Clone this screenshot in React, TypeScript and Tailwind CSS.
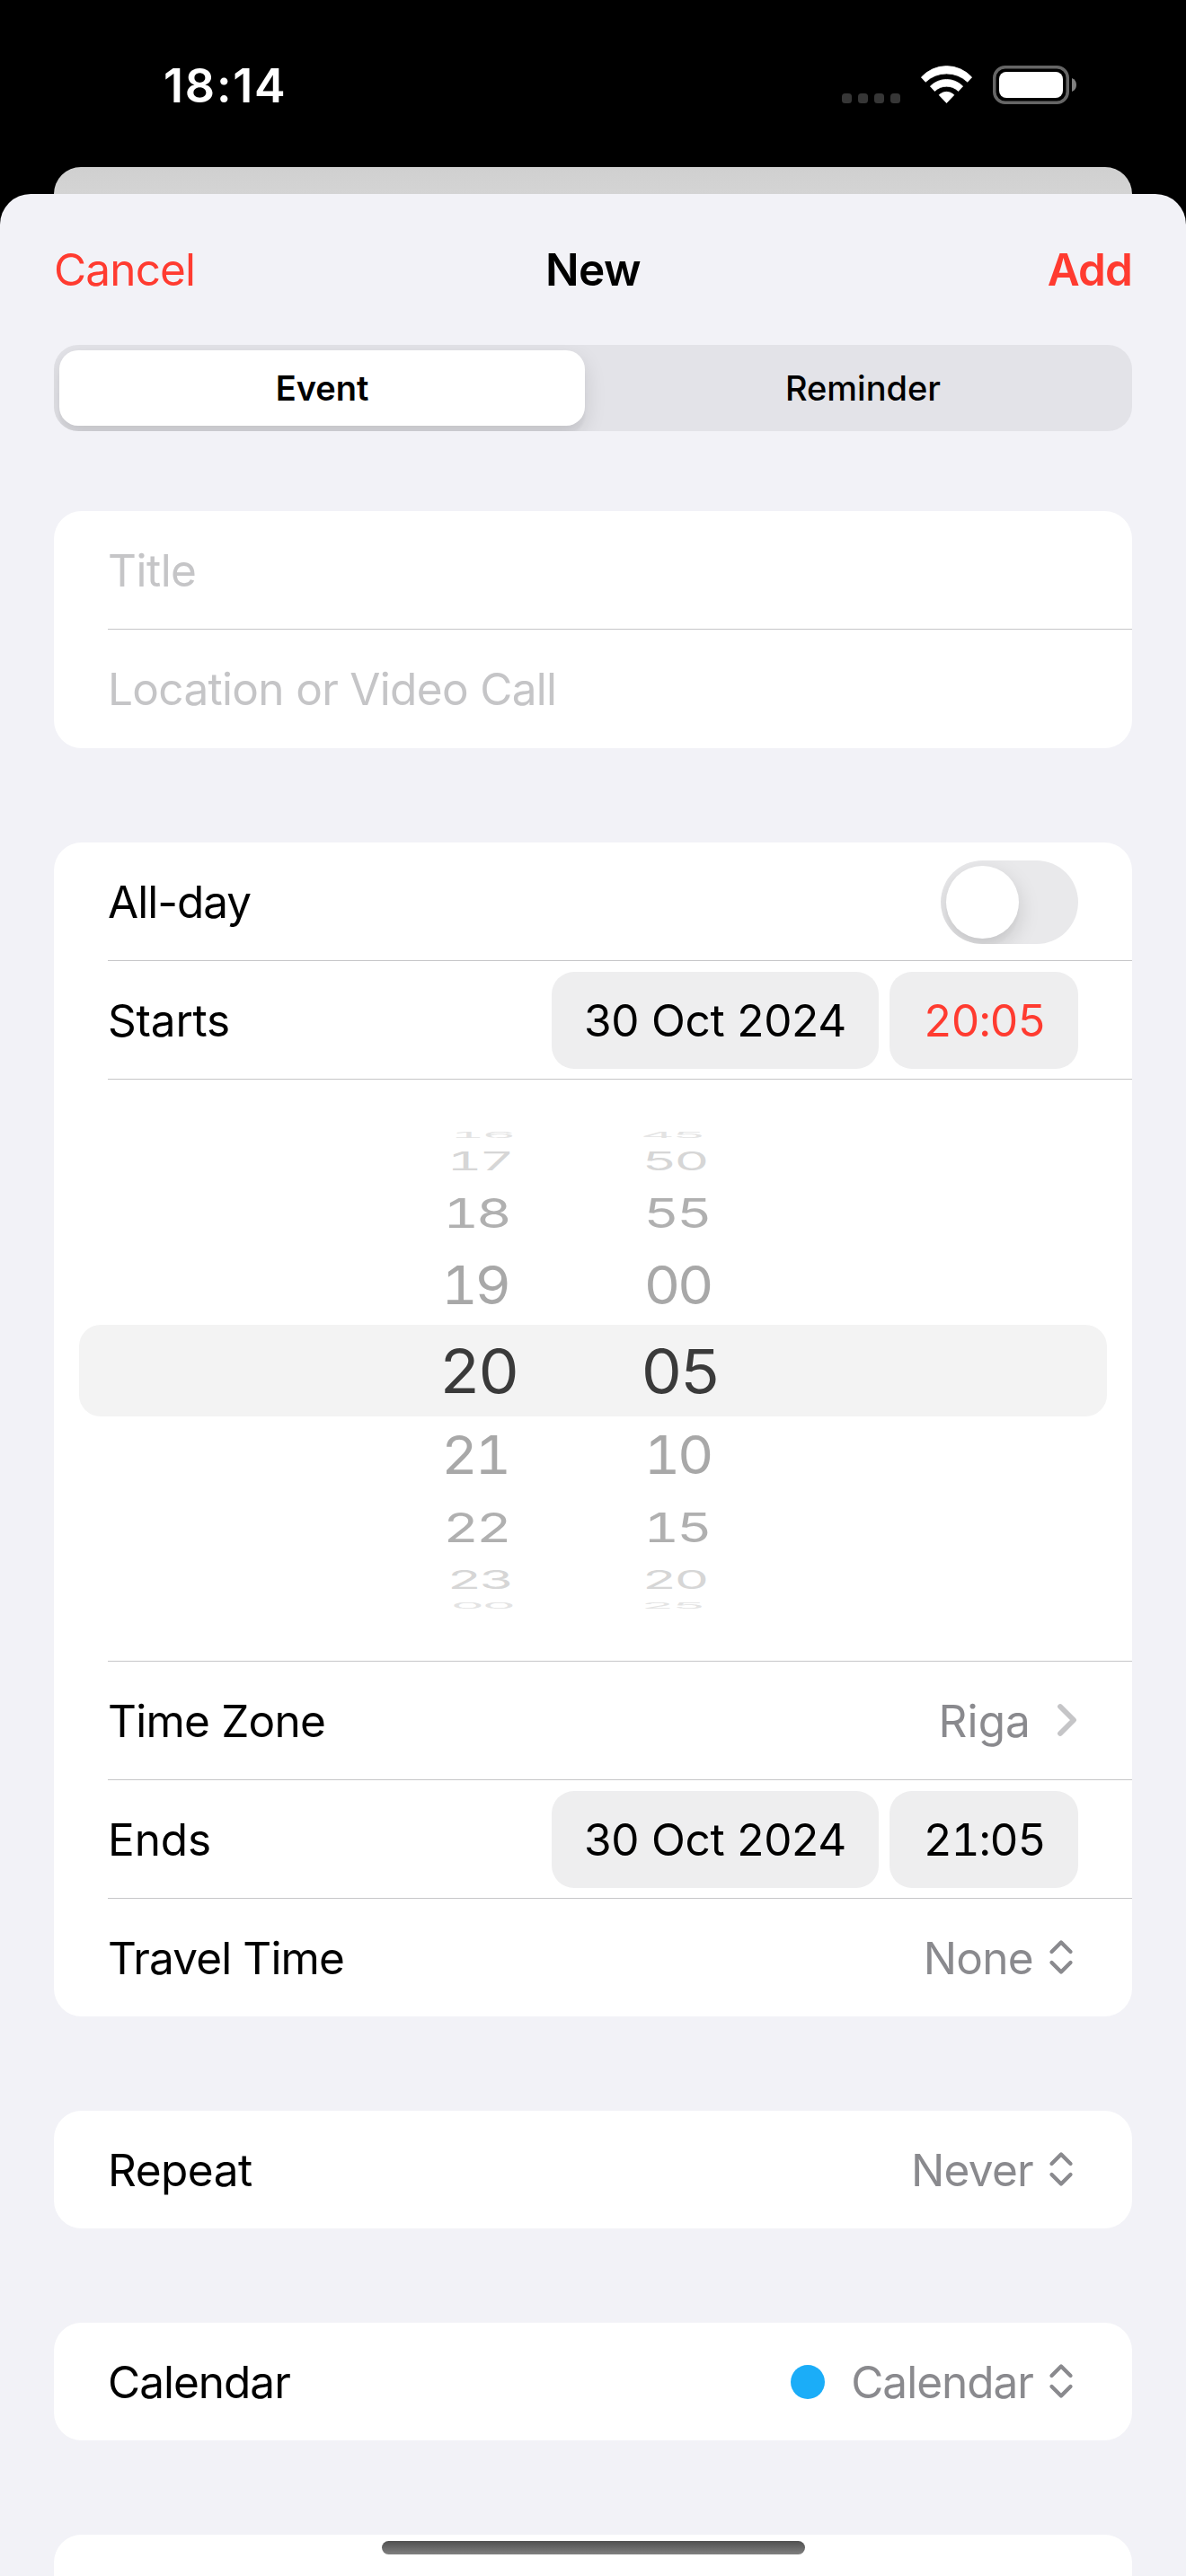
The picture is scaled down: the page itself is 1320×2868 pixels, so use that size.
import type { ReactNode } from "react";

const WHEEL_STEPS = [
  { hour: "16", minute: "45", row: "h-[16px]", color: "text-[#e3e3e3]", size: "text-[59.5px]", sx: 0.98, sy: 0.14, dh: 3.5, dm: -9 },
  { hour: "17", minute: "50", row: "h-[42px]", color: "text-[#d6d6d6]", size: "text-[59.5px]", sx: 1.01, sy: 0.48, dh: 0.5, dm: -6.5 },
  { hour: "18", minute: "55", row: "h-[74px]", color: "text-[#b0b0b0]", size: "text-[59.5px]", sx: 1.03, sy: 0.77, dh: -3, dm: -4 },
  { hour: "19", minute: "00", row: "h-[87px]", color: "text-[#a8a8a8]", size: "text-[59.5px]", sx: 1.05, sy: 1, dh: -4.5, dm: -3 },
  { hour: "20", minute: "05", row: "h-[102px]", color: "text-[#3a3a3a]", size: "text-[68px]", sx: 1.05, sy: 1, dh: -1, dm: -0.5 },
  { hour: "21", minute: "10", row: "h-[87px]", color: "text-[#a8a8a8]", size: "text-[59.5px]", sx: 1.05, sy: 1, dh: -4.5, dm: -3 },
  { hour: "22", minute: "15", row: "h-[74px]", color: "text-[#b0b0b0]", size: "text-[59.5px]", sx: 1.03, sy: 0.77, dh: -3, dm: -4 },
  { hour: "23", minute: "20", row: "h-[42px]", color: "text-[#d6d6d6]", size: "text-[59.5px]", sx: 1.01, sy: 0.48, dh: 0.5, dm: -6.5 },
  { hour: "00", minute: "25", row: "h-[16px]", color: "text-[#e3e3e3]", size: "text-[59.5px]", sx: 0.98, sy: 0.14, dh: 3.5, dm: -9 },
];

function Card({ children }: { children: ReactNode }) {
  return <section className="w-[1200px] overflow-hidden rounded-[31px] bg-white">{children}</section>;
}

function Divider() {
  return <div className="ml-[60px] h-px bg-[#c6c6c8]" />;
}

function Row({ label, tracking = "", last = false, children }: { label: string; tracking?: string; last?: boolean; children?: ReactNode }) {
  return (
    <>
      <div className="flex h-[131px] items-center justify-between pt-px pl-[60px]">
        <span className={`pt-[2px] ${tracking}`}>{label}</span>
        {children}
      </div>
      {!last && <Divider />}
    </>
  );
}

function Chip({ text, style }: { text: string; style: string }) {
  return <div className={`flex h-[108px] items-center justify-center rounded-[25px] bg-[#eeeeef] pt-[2px] ${style}`}>{text}</div>;
}

function DateTime({ date, time, active = false }: { date: string; time: string; active?: boolean }) {
  return (
    <div className="mr-[60px] flex gap-[12px]">
      <Chip text={date} style="w-[364px] tracking-[-0.25px]" />
      <Chip text={time} style={`w-[210px] pl-px tracking-[-1.2px] tabular-nums ${active ? "text-[#ff3b30]" : "text-black"}`} />
    </div>
  );
}

function UpDown() {
  return (
    <svg width="28" height="40" viewBox="0 0 28 40" fill="none" stroke="#8a8a8e" strokeWidth="4.3" strokeLinecap="round" strokeLinejoin="round">
      <path d="M3.5 14 14 3.5 24.5 14M3.5 26 14 36.5 24.5 26" />
    </svg>
  );
}

function MenuValue({ text, tracking, dot = false }: { text: string; tracking: string; dot?: boolean }) {
  return (
    <div className="mr-[65px] flex items-center text-[#8a8a8e]">
      {dot && <span className="mr-[29px] size-[38px] rounded-full bg-[#1badf8]" />}
      <span className={`pt-[2px] ${tracking}`}>{text}</span>
      <span className="mb-[2px] ml-[17px]">
        <UpDown />
      </span>
    </div>
  );
}

function StatusBar() {
  return (
    <div className="flex h-[186px] items-center justify-between pt-[6px] pr-[122px] pl-[182px] text-white">
      <span className="text-[52px] font-semibold tracking-[1.8px]">18:14</span>
      <div className="flex items-center">
        <div className="mt-[27px] mr-[23px] flex gap-[7px]">
          {[0, 1, 2, 3].map((i) => (
            <span key={i} className="size-[11px] rounded-[3.5px] bg-[#363636]" />
          ))}
        </div>
        <svg className="mr-[23px] mb-[4px]" width="57" height="42" viewBox="0 0 57 42" fill="#fff" stroke="#fff" strokeWidth="0.8" strokeLinejoin="round">
          <path d="M.4 13A38 38 0 0 1 56.6 13L51.8 18.2A34 34 0 0 0 5.2 18.2Z" />
          <path d="M10.4 23A25.5 25.5 0 0 1 46.6 23L41.6 28.4A19 19 0 0 0 15.4 28.4Z" />
          <path d="M20.2 32.8A11.5 11.5 0 0 1 36.8 32.8L28.5 41.6Z" />
        </svg>
        <svg className="mb-[3px]" width="93" height="43" viewBox="0 0 93 43">
          <rect x="1.75" y="1.75" width="81.5" height="39.5" rx="12" fill="none" stroke="#666" strokeWidth="3.5" />
          <rect x="7" y="7" width="71" height="29" rx="8" fill="#fff" />
          <path d="M88 14C91.5 15.5 93 18 93 21.5S91.5 27.5 88 29Z" fill="#808080" />
        </svg>
      </div>
    </div>
  );
}

function Segmented() {
  return (
    <div className="flex h-[96px] w-[1200px] shrink-0 overflow-hidden rounded-[27px] bg-[#e3e3e8] p-[6px] text-[38px]">
      <div className="flex w-[585px] items-center justify-center rounded-[21px] bg-white font-semibold shadow-[0_9px_24px_rgba(0,0,0,0.12),0_9px_3px_rgba(0,0,0,0.03)]">
        Event
      </div>
      <div className="flex flex-1 items-center justify-center pl-[16px] font-medium">Reminder</div>
    </div>
  );
}

function TimeWheel() {
  return (
    <div className="flex h-[647px] flex-col justify-center tracking-[-3px] tabular-nums">
      {WHEEL_STEPS.map((s) => (
        <div
          key={s.hour}
          className={`mx-[28px] flex shrink-0 items-center rounded-[24px] pl-[333px] leading-none ${s.row} ${s.color} ${s.size} ${s.hour === "20" ? "bg-[#f3f3f3]" : ""}`}
        >
          <span className="w-[224px] text-center" style={{ transform: `translateX(${s.dh}px) scale(${s.sx}, ${s.sy})` }}>
            {s.hour}
          </span>
          <span className="w-[224px] text-center" style={{ transform: `translateX(${s.dm}px) scale(${s.sx}, ${s.sy})` }}>
            {s.minute}
          </span>
        </div>
      ))}
    </div>
  );
}

export default function App() {
  return (
    <div className="relative h-[2868px] w-[1320px] overflow-hidden bg-black font-['Inter',sans-serif] text-[49.5px] leading-none text-black">
      <StatusBar />
      <div className="mx-auto h-[30px] w-[1200px] rounded-t-[30px] bg-linear-to-b from-[#d0d0d0] to-[#d4d4d4]" />
      <main className="flex h-[2652px] flex-col items-center overflow-hidden rounded-t-[34px] bg-[#f2f2f7]">
        <header className="grid h-[168px] w-[1200px] shrink-0 grid-cols-3 items-center pt-px">
          <span className="tracking-[-0.85px] text-[#ff3b30]">Cancel</span>
          <span className="text-center font-semibold tracking-[-0.5px]">New</span>
          <span className="text-right font-semibold tracking-[-0.9px] text-[#ff3b30]">Add</span>
        </header>
        <Segmented />
        <div className="mt-[89px] flex shrink-0 flex-col gap-[105px]">
          <Card>
            <div className="text-[#c5c5c7]">
              <Row label="Title" tracking="tracking-[-0.5px]" />
              <Row label="Location or Video Call" tracking="tracking-[-0.68px]" last />
            </div>
            <div className="h-px" />
          </Card>
          <Card>
            <Row label="All-day" tracking="tracking-[-1px]">
              <div className="mr-[60px] h-[93px] w-[153px] overflow-hidden rounded-full bg-[#e9e9eb] p-[6px]">
                <div className="size-[81px] rounded-full bg-white shadow-[0_9px_24px_rgba(0,0,0,0.15),0_9px_3px_rgba(0,0,0,0.02)]" />
              </div>
            </Row>
            <Row label="Starts" tracking="tracking-[-0.2px]">
              <DateTime date="30 Oct 2024" time="20:05" active />
            </Row>
            <TimeWheel />
            <Divider />
            <Row label="Time Zone" tracking="tracking-[-0.77px]">
              <div className="mr-[61px] flex items-center text-[#8a8a8e]">
                <span className="pt-[2px] tracking-[0.1px]">Riga</span>
                <svg className="mb-[3px] ml-[28px]" width="24" height="40" viewBox="0 0 24 40" fill="none" stroke="#c5c5c7" strokeWidth="5.8" strokeLinecap="round" strokeLinejoin="round">
                  <path d="M5 5 20 20 5 35" />
                </svg>
              </div>
            </Row>
            <Row label="Ends" tracking="tracking-[-0.1px]">
              <DateTime date="30 Oct 2024" time="21:05" />
            </Row>
            <Row label="Travel Time" tracking="tracking-[-0.88px]" last>
              <MenuValue text="None" tracking="tracking-[-0.7px]" />
            </Row>
          </Card>
          <Card>
            <Row label="Repeat" tracking="tracking-[-0.5px]" last>
              <MenuValue text="Never" tracking="tracking-[-0.7px]" />
            </Row>
          </Card>
          <Card>
            <Row label="Calendar" tracking="tracking-[-1px]" last>
              <MenuValue text="Calendar" tracking="tracking-[-1px]" dot />
            </Row>
          </Card>
          <Card>
            <div className="h-[131px]" />
          </Card>
        </div>
      </main>
      <div className="absolute bottom-[24px] left-[425px] h-[15px] w-[471px] rounded-full bg-linear-to-b from-[#505050] to-[#808080]" />
    </div>
  );
}
